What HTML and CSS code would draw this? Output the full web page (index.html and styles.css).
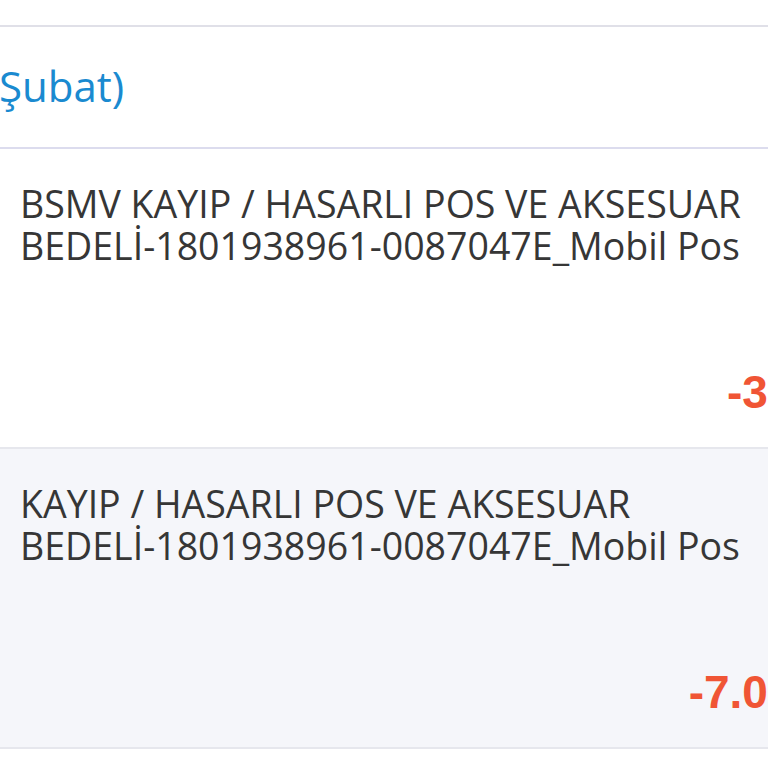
FILE: index.html
```html
<!DOCTYPE html>
<html lang="tr">
<head>
<meta charset="utf-8">
<title>Hesap hareketleri</title>
<link rel="stylesheet" href="styles.css">
</head>
<body>
<div class="page">
  <div class="topbar"></div>
  <div class="period">
    <span class="period-title">Şubat)</span>
  </div>
  <ul class="list">
    <li class="row">
      <p class="desc">BSMV KAYIP / HASARLI POS VE AKSESUAR BEDELİ-1801938961-0087047E_Mobil Pos</p>
      <p class="amount">-350,00 TL</p>
    </li>
    <li class="row row-alt">
      <p class="desc">KAYIP / HASARLI POS VE AKSESUAR BEDELİ-1801938961-0087047E_Mobil Pos</p>
      <p class="amount">-7.000,00 TL</p>
    </li>
  </ul>
</div>
</body>
</html>
```
FILE: styles.css
```css
html, body {
  margin: 0;
  padding: 0;
  overflow: hidden;
  background: #ffffff;
}

.page {
  width: 960px;
  font-family: "Open Sans", "Noto Sans", sans-serif;
}

.topbar {
  height: 25px;
  background: #ffffff;
  border-bottom: 2px solid #e0e0e8;
}

.period {
  height: 120px;
  display: flex;
  align-items: center;
  border-bottom: 2px solid #dcdcee;
  background: #ffffff;
}

.period-title {
  font-size: 42px;
  color: #1a8ad0;
  margin-left: -1px;
  line-height: 1;
  padding-bottom: 2px;
}

.list {
  list-style: none;
  margin: 0;
  padding: 0;
}

.row {
  display: flex;
  flex-direction: column;
  padding: 34px 8px 30px 20px;
  border-bottom: 2px solid #e6e7ed;
  background: #ffffff;
}

.row-alt {
  background: #f5f6fa;
}

.desc {
  margin: 0;
  max-width: 732px;
  font-size: 37.5px;
  line-height: 42px;
  color: #363636;
}

.amount {
  margin: 100px 0 0;
  text-align: right;
  font-family: "Liberation Sans", Arial, sans-serif;
  font-weight: bold;
  font-size: 46px;
  line-height: 50px;
  color: #f05535;
}
```
